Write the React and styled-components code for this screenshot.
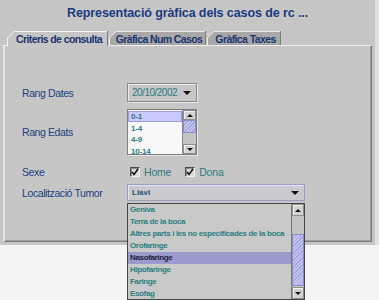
import React from "react";
import styled, { createGlobalStyle } from "styled-components";

const GlobalStyle = createGlobalStyle`
  html, body {
    margin: 0;
    padding: 0;
    background: #f4f4f4;
    min-height: 300px;
  }
  #root {
    min-height: 300px;
  }
  body {
    font-family: "Liberation Sans", Arial, sans-serif;
  }
`;

const Frame = styled.div`
  position: relative;
  width: 379px;
  height: 245px;
  box-sizing: border-box;
  background: #c6c6c6;
  padding: 0 3px 3px 3px;
  border-right: 4px solid #e0e0e0;
  display: flex;
  flex-direction: column;
`;

const Title = styled.div`
  height: 31px;
  display: flex;
  align-items: center;
  justify-content: center;
  padding-bottom: 6px;
  box-sizing: border-box;
  font-size: 12.5px;
  font-weight: bold;
  letter-spacing: -0.1px;
  color: #1c3a80;
`;

const TabRow = styled.div`
  display: flex;
  height: 14px;
  padding-left: 4px;
  position: relative;
  z-index: 1;
`;

const TabOuter = styled.div`
  width: ${(p) => p.$w}px;
  height: ${(p) => (p.$active ? 15 : 14)}px;
  margin-right: 1px;
  background: ${(p) => (p.$active ? "#f2f2f2" : "#ececec")};
  clip-path: polygon(7px 0, 100% 0, 100% 100%, 0 100%, 0 7px);
  padding: 1px 1px 0 1px;
  box-sizing: border-box;
  position: relative;

  &::after {
    content: "";
    position: absolute;
    right: 0;
    top: 0;
    bottom: 0;
    width: 1px;
    background: #7c7c7c;
  }
`;

const TabInner = styled.div`
  height: 100%;
  background: ${(p) => (p.$active ? "#c6c6c6" : "#a8a8a8")};
  clip-path: polygon(6px 0, 100% 0, 100% 100%, 0 100%, 0 6px);
  display: flex;
  align-items: center;
  justify-content: center;
  padding-left: 3px;
  font-size: 10.5px;
  font-weight: bold;
  letter-spacing: -0.6px;
  color: #1b3470;
  white-space: nowrap;
`;

const Panel = styled.div`
  flex: 1;
  border-top: 1px solid #f0f0f0;
  border-left: 2px solid #e4e4e4;
  border-right: 1px solid #7a7a7a;
  border-bottom: 1px solid #7a7a7a;
  box-shadow: inset -1px -1px 0 #9e9e9e;
  padding: 37px 0 0 17px;
  display: grid;
  grid-template-columns: 105px 1fr;
  align-content: start;
  align-items: center;
`;

const Label = styled.div`
  font-size: 10.5px;
  letter-spacing: -0.4px;
  color: #20407e;
  margin-top: ${(p) => p.$mt || 0}px;
`;

const Cell = styled.div`
  margin-top: ${(p) => p.$mt || 0}px;
  display: flex;
  align-items: center;
  position: relative;
`;

const DateCombo = styled.div`
  width: 70px;
  height: 19px;
  box-sizing: border-box;
  border: 1px solid #8c8c8c;
  box-shadow: inset 1px 1px 0 #e8e8e8, 1px 1px 0 #e6e6e6;
  display: flex;
  align-items: center;
  justify-content: space-between;
  padding: 0 5px 0 4px;
  font-size: 10px;
  letter-spacing: -0.5px;
  color: #2b7b7d;
`;

const DownArrow = styled.span`
  width: 0;
  height: 0;
  border-left: ${(p) => p.$s || 4}px solid transparent;
  border-right: ${(p) => p.$s || 4}px solid transparent;
  border-top: ${(p) => p.$s || 4}px solid #111;
`;

const UpArrow = styled.span`
  width: 0;
  height: 0;
  border-left: 3px solid transparent;
  border-right: 3px solid transparent;
  border-bottom: 3px solid #111;
`;

const ListBox = styled.div`
  width: 70px;
  height: 46px;
  box-sizing: border-box;
  border: 1px solid #7e7e7e;
  box-shadow: 1px 1px 0 #e6e6e6;
  display: flex;
  background: #f8f8f8;
`;

const ListItems = styled.div`
  flex: 1;
  overflow: hidden;
  padding-top: 1px;
`;

const AgeItem = styled.div`
  height: 11px;
  font-size: 8px;
  font-weight: bold;
  letter-spacing: -0.2px;
  padding-left: 2px;
  color: #2b7b7d;
  box-sizing: border-box;
  background: ${(p) => (p.$sel ? "#c9c9fb" : "transparent")};
  border: 1px solid ${(p) => (p.$sel ? "#9d9de0" : "transparent")};
  line-height: 9px;
  margin-bottom: 0.5px;
`;

const ScrollBar = styled.div`
  width: 13px;
  display: flex;
  flex-direction: column;
  background: #c8c8c8;
  border-left: 1px solid #8a8a8a;
`;

const ScrollBtn = styled.div`
  height: ${(p) => p.$h || 10}px;
  display: flex;
  align-items: center;
  justify-content: center;
  background: #d2d2d2;
  border: 1px solid #8e8e8e;
  box-shadow: inset 1px 1px 0 #f0f0f0;
  box-sizing: border-box;
`;

const Thumb = styled.div`
  height: ${(p) => p.$h}px;
  margin-top: ${(p) => p.$top || 0}px;
  box-sizing: border-box;
  border: 1px solid #8c8cc8;
  background: repeating-linear-gradient(
    135deg,
    #a4a4dc 0 1px,
    #c4c4ef 1px 2.5px
  );
`;

const Track = styled.div`
  flex: 1;
  display: flex;
  flex-direction: column;
  background: #c4c4c4;
`;

const Checks = styled.div`
  display: flex;
  gap: 14px;
  padding-left: 3px;
`;

const CheckItem = styled.label`
  display: flex;
  align-items: center;
  gap: 4px;
  font-size: 10.5px;
  letter-spacing: -0.2px;
  color: #2b7b7d;
`;

const Box = styled.span`
  width: 10px;
  height: 10px;
  box-sizing: border-box;
  border: 1px solid #4a4a4a;
  border-right-color: #f0f0f0;
  border-bottom-color: #f0f0f0;
  box-shadow: inset 1px 1px 0 #8a8a8a;
  background: #dcdcdc;
  display: flex;
  align-items: center;
  justify-content: center;
`;

const LocCombo = styled.div`
  width: 178px;
  height: 17px;
  box-sizing: border-box;
  border: 1px solid #9e9ec4;
  box-shadow: inset 1px 1px 0 #e4e4f0;
  background: #c9c9cf;
  display: flex;
  align-items: center;
  justify-content: space-between;
  padding: 0 5px 0 4px;
  font-size: 8px;
  font-weight: bold;
  color: #2a5468;
`;

const Popup = styled.div`
  position: absolute;
  left: 0;
  top: 19px;
  width: 178px;
  height: 97px;
  box-sizing: border-box;
  border: 1px solid #444;
  background: #c9c9c9;
  display: flex;
  z-index: 5;
`;

const PopItems = styled.div`
  flex: 1;
  overflow: hidden;
`;

const PopItem = styled.div`
  height: 12px;
  line-height: 12px;
  font-size: 8px;
  font-weight: bold;
  letter-spacing: -0.35px;
  padding-left: 2px;
  white-space: nowrap;
  color: ${(p) => (p.$sel ? "#1c1c3c" : "#2a8080")};
  background: ${(p) => (p.$sel ? "#9a9acc" : "transparent")};
`;

const PopScroll = styled(ScrollBar)`
  width: 12px;
  border-left: 1px solid #777;
`;

const CheckMark = () => (
  <svg width="8" height="8" viewBox="0 0 8 8">
    <path d="M1 4 L3 6.5 L7 1" fill="none" stroke="#111" strokeWidth="1.6" />
  </svg>
);

const tabs = [
  { label: "Criteris de consulta", w: 101, active: true },
  { label: "Gràfica Num Casos", w: 97 },
  { label: "Gràfica Taxes", w: 74 },
];

const ages = ["0-1", "1-4", "4-9", "10-14"];

const tumors = [
  "Geniva",
  "Terra de la boca",
  "Altres parts i les no especificades de la boca",
  "Orofaringe",
  "Nasofaringe",
  "Hipofaringe",
  "Faringe",
  "Esòfag",
];

export default function App() {
  return (
    <>
      <GlobalStyle />
      <Frame>
        <Title>Representació gràfica dels casos de rc ...</Title>
        <TabRow>
          {tabs.map((t) => (
            <TabOuter key={t.label} $w={t.w} $active={t.active}>
              <TabInner $active={t.active}>{t.label}</TabInner>
            </TabOuter>
          ))}
        </TabRow>
        <Panel>
          <Label>Rang Dates</Label>
          <Cell>
            <DateCombo>
              <span>20/10/2002</span>
              <DownArrow />
            </DateCombo>
          </Cell>

          <Label $mt={7}>Rang Edats</Label>
          <Cell $mt={7}>
            <ListBox>
              <ListItems>
                {ages.map((a, i) => (
                  <AgeItem key={a} $sel={i === 0}>
                    {a}
                  </AgeItem>
                ))}
              </ListItems>
              <ScrollBar>
                <ScrollBtn>
                  <UpArrow />
                </ScrollBtn>
                <Track>
                  <Thumb $h={13} />
                </Track>
                <ScrollBtn>
                  <DownArrow $s={3} />
                </ScrollBtn>
              </ScrollBar>
            </ListBox>
          </Cell>

          <Label $mt={11}>Sexe</Label>
          <Cell $mt={11}>
            <Checks>
              <CheckItem>
                <Box>
                  <CheckMark />
                </Box>
                Home
              </CheckItem>
              <CheckItem>
                <Box>
                  <CheckMark />
                </Box>
                Dona
              </CheckItem>
            </Checks>
          </Cell>

          <Label $mt={6}>Localització Tumor</Label>
          <Cell $mt={6}>
            <LocCombo>
              <span>Llavi</span>
              <DownArrow />
            </LocCombo>
            <Popup>
              <PopItems>
                {tumors.map((t) => (
                  <PopItem key={t} $sel={t === "Nasofaringe"}>
                    {t}
                  </PopItem>
                ))}
              </PopItems>
              <PopScroll>
                <ScrollBtn $h={12}>
                  <UpArrow />
                </ScrollBtn>
                <Track>
                  <Thumb $h={52} $top={18} />
                </Track>
                <ScrollBtn $h={12}>
                  <DownArrow $s={3} />
                </ScrollBtn>
              </PopScroll>
            </Popup>
          </Cell>
        </Panel>
      </Frame>
    </>
  );
}
